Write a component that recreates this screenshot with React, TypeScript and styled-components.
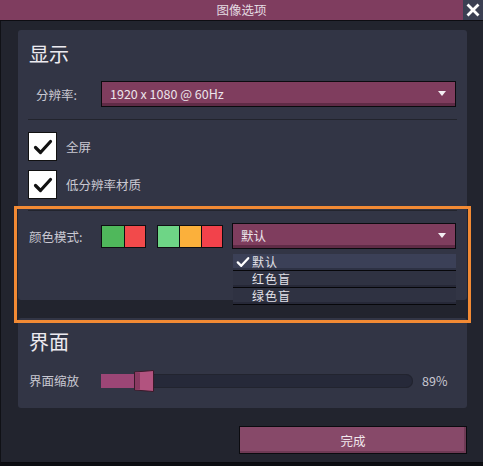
import React from "react";
import styled, { createGlobalStyle } from "styled-components";

const Global = createGlobalStyle`
  html, body { margin: 0; padding: 0; background: #0c0d12; }
  body { font-family: "Noto Sans CJK SC", "Noto Sans", sans-serif; }
`;

const Window = styled.div`
  position: relative;
  width: 483px;
  height: 463px;
  box-sizing: border-box;
  background: #22242e;
  border-left: 1px solid #101116;
  border-bottom: 1px solid #0a0a0e;
  display: flex;
  flex-direction: column;
`;

const TitleBar = styled.div`
  position: relative;
  height: 20px;
  margin-left: -1px;
  background: #7f3d5f;
  border-bottom: 1px solid #0d0d12;
  color: #e4dbe2;
  font-size: 12.5px;
  line-height: 20px;
  text-align: center;
  padding-right: 20px;
  padding-left: 0;
  text-indent: 20px;
`;

const CloseBtn = styled.div`
  position: absolute;
  right: 0;
  top: 0;
  width: 20px;
  height: 20px;
  background: #3b3f52;
  display: flex;
  align-items: center;
  justify-content: center;
  text-indent: 0;
`;

const Body = styled.div`
  display: flex;
  flex-direction: column;
  padding: 9px 16px 0 17px;
`;

const Panel = styled.div<{ $h: number }>`
  background: #323545;
  border-radius: 3px;
  height: ${(p) => p.$h}px;
  box-sizing: border-box;
  padding: 10px 10px 0 10px;
  display: flex;
  flex-direction: column;
`;

const Heading = styled.div`
  color: #eceaf0;
  font-size: 20px;
  line-height: 28px;
  height: 28px;
  padding-left: 1px;
`;

const Row = styled.div<{ $mt: number; $labelW: number; $indent?: number }>`
  display: flex;
  align-items: center;
  margin-top: ${(p) => p.$mt}px;
  & > label:first-child {
    width: ${(p) => p.$labelW}px;
    padding-left: ${(p) => p.$indent ?? 1}px;
    box-sizing: border-box;
    flex: none;
  }
`;

const Label = styled.label`
  color: #c9c8d2;
  font-size: 12.5px;
`;

const Select = styled.div<{ $w: number }>`
  width: ${(p) => p.$w}px;
  height: 26px;
  box-sizing: border-box;
  background: #7f3d5e;
  border: 1px solid #0b0b0f;
  box-shadow: inset 0 -3px 0 #5f2b46;
  display: flex;
  align-items: center;
  justify-content: space-between;
  padding: 0 9px 2px 8px;
  color: #ece4ea;
  font-size: 12.5px;
  flex: none;
`;

const Arrow = styled.span`
  width: 0;
  height: 0;
  border-left: 4px solid transparent;
  border-right: 4px solid transparent;
  border-top: 5px solid #f3eef2;
  margin-top: 1px;
`;

const Separator = styled.div<{ $mt: number }>`
  height: 1px;
  background: #22242d;
  margin-top: ${(p) => p.$mt}px;
`;

const CheckRow = styled.div<{ $mt: number }>`
  display: flex;
  align-items: center;
  gap: 9px;
  margin-top: ${(p) => p.$mt}px;
`;

const CheckBox = styled.div`
  width: 29px;
  height: 29px;
  box-sizing: border-box;
  background: #ffffff;
  border: 1px solid #111;
  display: flex;
  align-items: center;
  justify-content: center;
  flex: none;
`;

const SwatchGroup = styled.div<{ $mr: number }>`
  display: flex;
  border: 1px solid #0e0e12;
  margin-right: ${(p) => p.$mr}px;
  height: 23px;
  box-sizing: border-box;
  flex: none;
`;

const Swatch = styled.div<{ $c: string; $w: number }>`
  width: ${(p) => p.$w}px;
  background: ${(p) => p.$c};
  & + & {
    border-left: 1px solid #0e0e12;
  }
`;

const Highlight = styled.div`
  position: absolute;
  left: 13px;
  top: 206px;
  width: 457px;
  height: 117px;
  box-sizing: border-box;
  border: 3px solid #f28a34;
  pointer-events: none;
`;

const Menu = styled.div`
  position: absolute;
  left: 232px;
  top: 254px;
  width: 223px;
  display: flex;
  flex-direction: column;
`;

const MenuItem = styled.div<{ $active?: boolean }>`
  height: 17px;
  box-sizing: border-box;
  background: ${(p) => (p.$active ? "#3b4057" : "#2f3242")};
  box-shadow: inset 0 -2px 0 ${(p) => (p.$active ? "#2e3244" : "#262837")};
  border-bottom: 1px solid #07070a;
  display: flex;
  align-items: center;
  padding-left: 3px;
  color: #e2e1e8;
  font-size: 12px;
  line-height: 16px;
  letter-spacing: 1px;
`;

const CheckMark = styled.span`
  width: 16px;
  display: inline-flex;
  align-items: center;
`;

const SliderTrack = styled.div`
  position: relative;
  width: 312px;
  height: 14px;
  background: #262939;
  border-radius: 0 7px 7px 0;
  box-shadow: inset 0 0 0 1px #22242f;
  flex: none;
`;

const SliderFill = styled.div`
  position: absolute;
  left: 0;
  top: 0;
  bottom: 0;
  background: #9c4676;
`;

const Thumb = styled.svg`
  position: absolute;
  top: -4px;
`;

const Value = styled.span`
  color: #c9c8d2;
  font-size: 12.5px;
  margin-left: 9px;
`;

const Footer = styled.div`
  display: flex;
  justify-content: flex-end;
  margin-top: 18px;
`;

const Button = styled.div`
  width: 228px;
  height: 28px;
  box-sizing: border-box;
  background: #874969;
  border: 1px solid #0b0b0f;
  box-shadow: inset -2px -2px 0 #6e3a55;
  color: #f0e6ec;
  font-size: 12.5px;
  display: flex;
  align-items: center;
  justify-content: center;
`;

const Check = ({ size = 20, color = "#111" }: { size?: number; color?: string }) => (
  <svg width={size} height={size} viewBox="0 0 20 20">
    <path d="M2.5 10.5 L7.5 15.5 L17.5 4.5" fill="none" stroke={color} strokeWidth={3.2} strokeLinecap="round" strokeLinejoin="round" />
  </svg>
);

export default function App() {
  const scale = 89;
  const fillW = 34;
  return (
    <>
      <Global />
      <Window>
        <TitleBar>
          图像选项
          <CloseBtn>
            <svg width="14" height="14" viewBox="0 0 14 14">
              <path d="M2.5 2.5 L11.5 11.5 M11.5 2.5 L2.5 11.5" stroke="#ffffff" strokeWidth="2.8" strokeLinecap="square" />
            </svg>
          </CloseBtn>
        </TitleBar>
        <Body>
          <Panel $h={270}>
            <Heading>显示</Heading>
            <Row $mt={13} $labelW={73} $indent={8}>
              <Label>分辨率:</Label>
              <Select $w={355}>
                <span>1920 x 1080 @ 60Hz</span>
                <Arrow />
              </Select>
            </Row>
            <Separator $mt={12} />
            <CheckRow $mt={12}>
              <CheckBox>
                <Check />
              </CheckBox>
              <Label>全屏</Label>
            </CheckRow>
            <CheckRow $mt={9}>
              <CheckBox>
                <Check />
              </CheckBox>
              <Label>低分辨率材质</Label>
            </CheckRow>
            <Separator $mt={11} />
            <Row $mt={12} $labelW={73}>
              <Label>颜色模式:</Label>
              <SwatchGroup $mr={11}>
                <Swatch $c="#4fb85b" $w={22} />
                <Swatch $c="#f24a4b" $w={20} />
              </SwatchGroup>
              <SwatchGroup $mr={9}>
                <Swatch $c="#6ed586" $w={21} />
                <Swatch $c="#fbb03b" $w={21} />
                <Swatch $c="#f2424b" $w={20} />
              </SwatchGroup>
              <Select $w={224}>
                <span>默认</span>
                <Arrow />
              </Select>
            </Row>
          </Panel>
          <Panel $h={90} style={{ marginTop: 18 }}>
            <Heading>界面</Heading>
            <Row $mt={15} $labelW={73}>
              <Label>界面缩放</Label>
              <SliderTrack>
                <SliderFill style={{ width: fillW }} />
                <Thumb width="20" height="22" viewBox="0 0 20 22" style={{ left: fillW - 1 }}>
                  <path d="M0.5 2 L19.5 0.5 L19.5 21.5 L0.5 20 Z" fill="#b2537f" stroke="#3a1a2a" strokeWidth="1" />
                  <rect x="1" y="2.5" width="5" height="17" fill="#8a3a62" />
                </Thumb>
              </SliderTrack>
              <Value>{scale}%</Value>
            </Row>
          </Panel>
          <Footer>
            <Button>完成</Button>
          </Footer>
        </Body>
        <Highlight />
        <Menu>
          <MenuItem $active>
            <CheckMark>
              <Check size={14} color="#ffffff" />
            </CheckMark>
            默认
          </MenuItem>
          <MenuItem>
            <CheckMark />
            红色盲
          </MenuItem>
          <MenuItem>
            <CheckMark />
            绿色盲
          </MenuItem>
        </Menu>
      </Window>
    </>
  );
}
